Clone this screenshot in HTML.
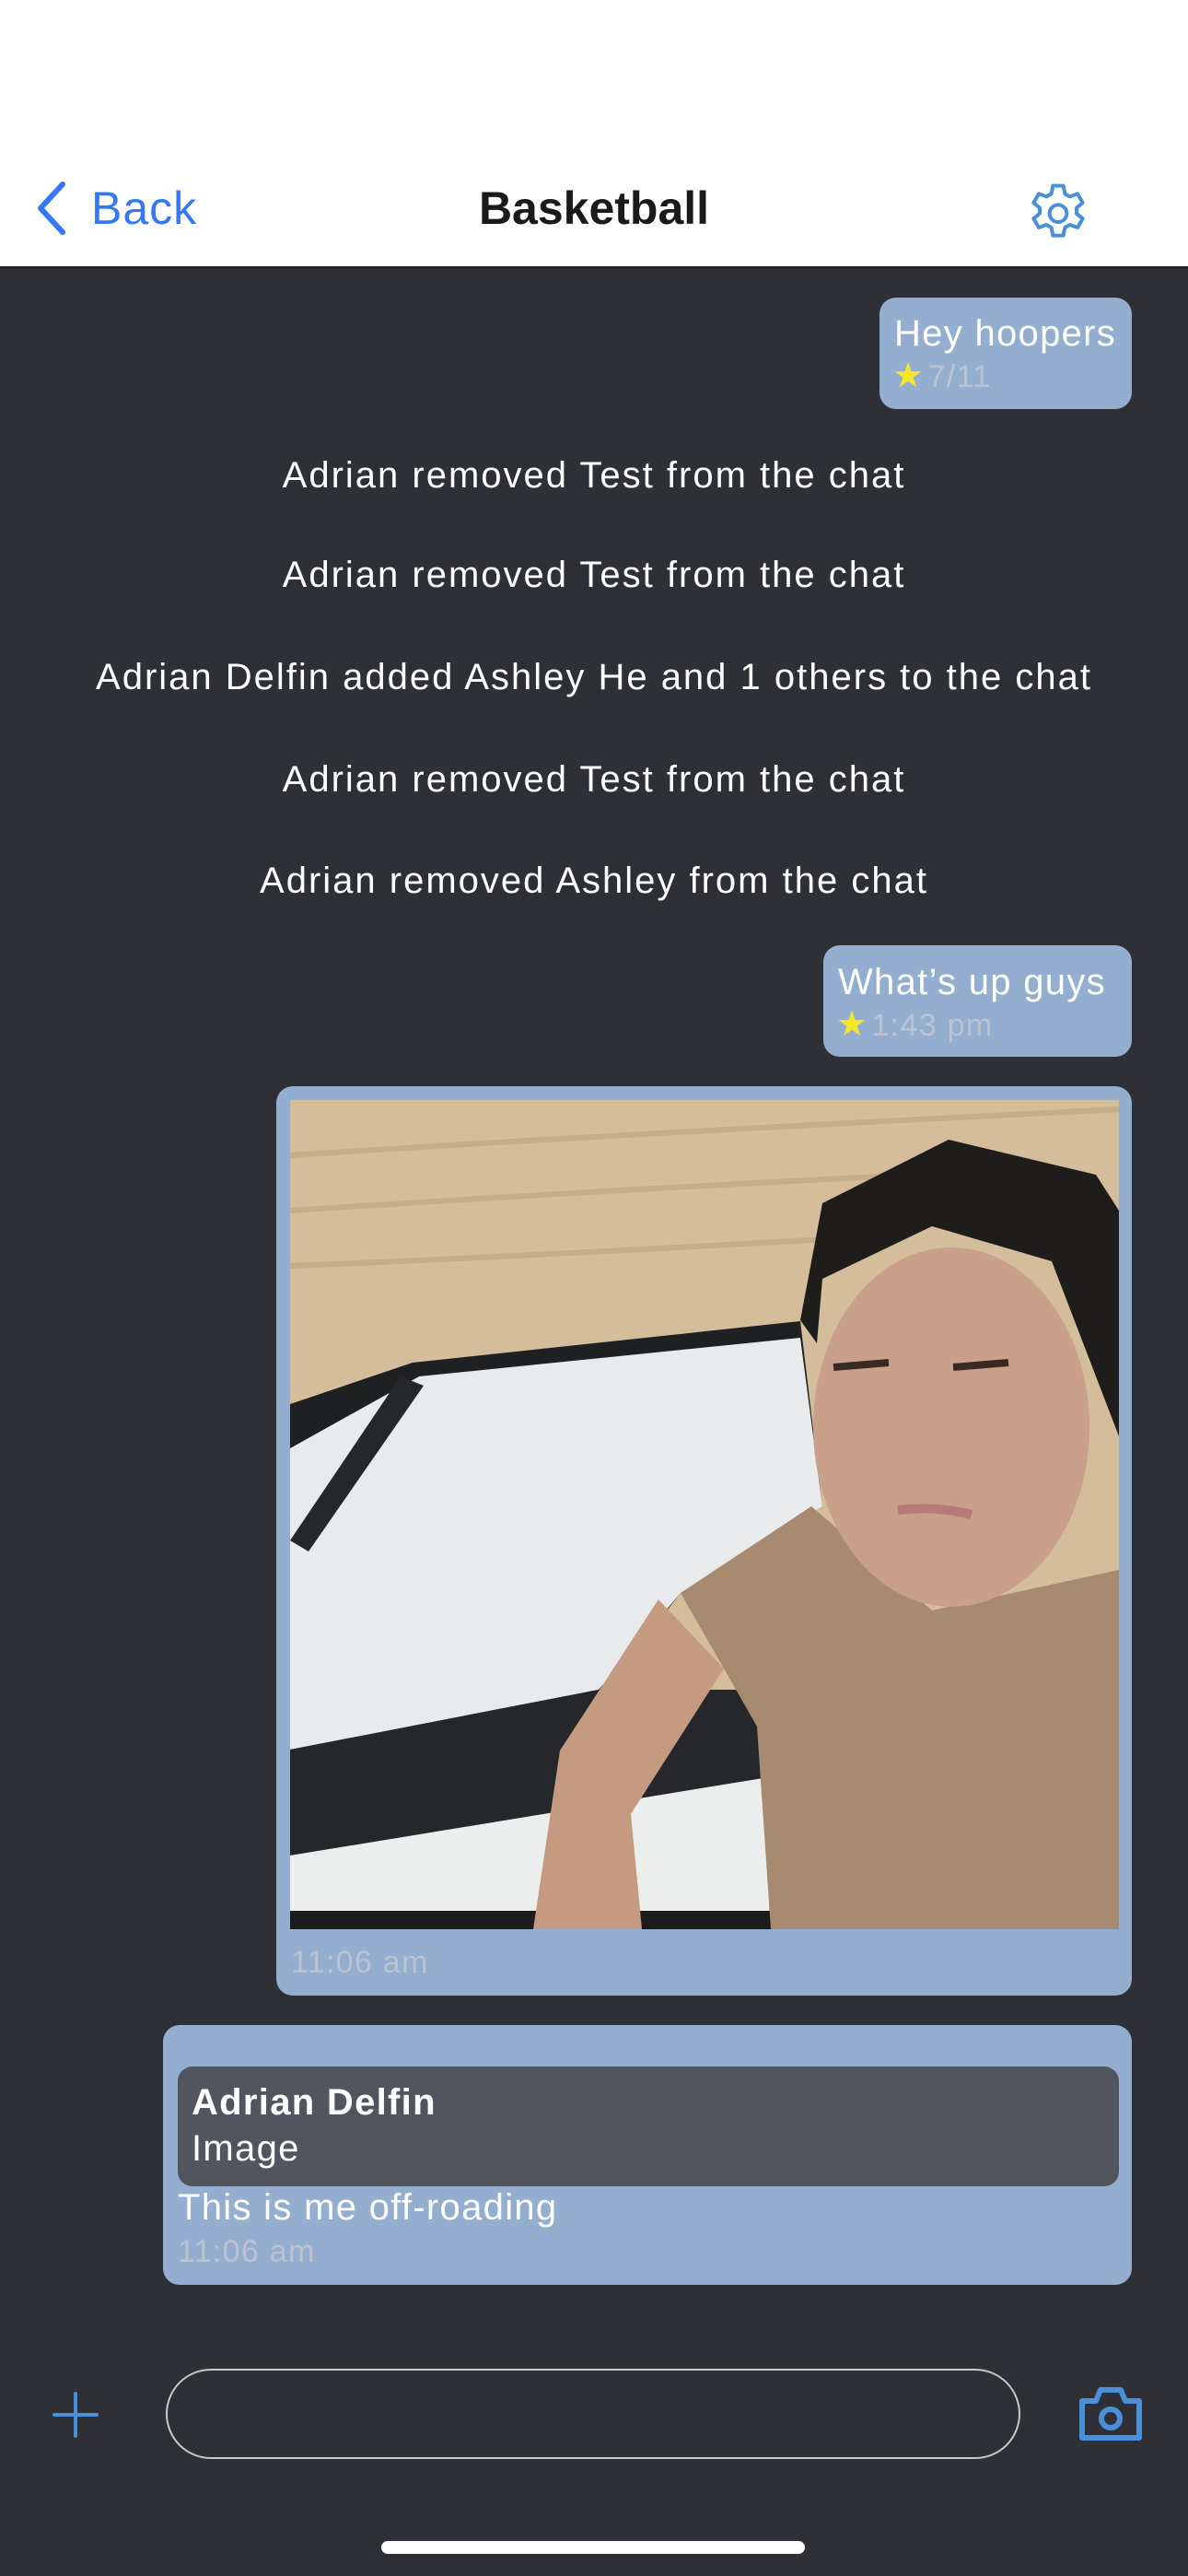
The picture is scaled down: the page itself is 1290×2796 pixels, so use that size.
<!DOCTYPE html>
<html><head><meta charset="utf-8"><style>
*{margin:0;padding:0;box-sizing:border-box}
body{width:1290px;height:2796px;background:#2f3035;font-family:"Liberation Sans",sans-serif;position:relative;overflow:hidden}
.a{position:absolute;white-space:nowrap}
.hdr{position:absolute;left:0;top:0;width:1290px;height:291px;background:#fff;border-bottom:2px solid #222}
.b{position:absolute;background:#94aed0;border-radius:18px}
.t{color:#fff;font-size:40px;line-height:46px;letter-spacing:1.3px}
.ts{color:#bcc3cf;font-size:34px;line-height:40px;letter-spacing:1.3px}
.sys{left:0;width:1290px;text-align:center;color:#fff;font-size:40px;line-height:46px;letter-spacing:2px}
.star{color:#f5e62a;font-size:38px}
</style></head><body>
<div class="hdr">
 <svg class="a" style="left:36px;top:196px" width="40" height="60" viewBox="0 0 40 60"><path d="M32 4 L8 30 L32 56" fill="none" stroke="#3478f6" stroke-width="6" stroke-linecap="round" stroke-linejoin="round"/></svg>
 <div class="a" style="left:99px;top:196px;font-size:50px;line-height:60px;color:#3478f6;letter-spacing:1px">Back</div>
 <div class="a" style="left:0;width:1290px;text-align:center;top:196px;font-size:50px;line-height:60px;font-weight:bold;color:#1a1a1a">Basketball</div>
 <svg class="a" style="left:1109px;top:190px" width="80" height="80" viewBox="0 0 24 24"><path fill="none" stroke="#4a90d9" stroke-width="1.2" stroke-linejoin="round" d="M10.3 2h3.4l.5 2.6 1.6.9 2.5-.9 1.7 2.9-2 1.7v1.8l2 1.7-1.7 2.9-2.5-.9-1.6.9-.5 2.6h-3.4l-.5-2.6-1.6-.9-2.5.9-1.7-2.9 2-1.7v-1.8l-2-1.7 1.7-2.9 2.5.9 1.6-.9z" transform="translate(0 1.5)"/><circle cx="12" cy="12.5" r="2.8" fill="none" stroke="#4a90d9" stroke-width="1.2"/></svg>
</div>

<div class="b" style="left:955px;top:323px;width:274px;height:121px"></div>
<div class="a t" style="left:971px;top:339px">Hey hoopers</div>
<div class="a" style="left:969px;top:386px;line-height:44px"><span class="star">★</span> <span class="ts">7/11</span></div>

<div class="a sys" style="top:493px">Adrian removed Test from the chat</div>
<div class="a sys" style="top:601px">Adrian removed Test from the chat</div>
<div class="a sys" style="top:712px">Adrian Delfin added Ashley He and 1 others to the chat</div>
<div class="a sys" style="top:823px">Adrian removed Test from the chat</div>
<div class="a sys" style="top:933px">Adrian removed Ashley from the chat</div>

<div class="b" style="left:894px;top:1026px;width:335px;height:121px"></div>
<div class="a t" style="left:910px;top:1043px">What’s up guys</div>
<div class="a" style="left:908px;top:1090px;line-height:44px"><span class="star">★</span> <span class="ts">1:43 pm</span></div>

<div class="b" style="left:300px;top:1179px;width:929px;height:987px"></div>
<svg class="a" style="left:315px;top:1194px" width="900" height="900" viewBox="0 0 900 900">
 <rect width="900" height="900" fill="#d3bd9b"/>
 <path d="M0 60 Q300 40 900 10 M0 120 Q300 100 700 80 M0 180 Q250 170 600 150" stroke="#c4ad88" stroke-width="6" fill="none"/>
 <path d="M0 330 L133 285 L554 240 L578 441 L424 535 L335 649 L0 718Z" fill="#1f2022"/>
 <path d="M0 378 L140 300 L554 258 L578 441 L424 535 L335 640 L0 705Z" fill="#e9eaec"/>
 <path d="M0 478 L120 300 L145 310 L20 490Z" fill="#262729"/>
 <path d="M0 705 L335 640 L520 640 L520 735 L0 820Z" fill="#25272a"/>
 <path d="M0 820 L520 735 L520 880 L0 880Z" fill="#eceded"/>
 <rect x="0" y="880" width="900" height="20" fill="#1c1c1d"/>
 <path d="M264 900 L293 706 L400 542 L471 617 L370 775 L382 900Z" fill="#c49a80"/>
 <path d="M424 535 L566 441 L697 554 L900 510 L900 900 L522 900 L507 680 L471 617Z" fill="#a78a6f"/>
 <ellipse cx="718" cy="355" rx="150" ry="195" fill="#c9a18a"/>
 <path d="M554 239 L578 112 L715 43 L875 81 L900 120 L900 365 L827 175 L697 137 L578 194 L572 264Z" fill="#1f1c1c"/>
 <path d="M590 290 L650 285 M720 290 L780 285" stroke="#3a2a25" stroke-width="8"/>
 <path d="M660 445 Q700 440 740 450" stroke="#b77a78" stroke-width="10" fill="none"/>
</svg>
<div class="a ts" style="left:316px;top:2110px">11:06 am</div>

<div class="b" style="left:177px;top:2198px;width:1052px;height:282px"></div>
<div class="a" style="left:193px;top:2243px;width:1022px;height:130px;background:#52555e;border-radius:16px"></div>
<div class="a t" style="left:208px;top:2259px;font-weight:bold">Adrian Delfin</div>
<div class="a t" style="left:208px;top:2309px">Image</div>
<div class="a t" style="left:193px;top:2373px">This is me off-roading</div>
<div class="a ts" style="left:193px;top:2424px">11:06 am</div>

<svg class="a" style="left:57px;top:2596px" width="50" height="50" viewBox="0 0 50 50"><path d="M25 2V48M2 25H48" stroke="#4a90d9" stroke-width="4" stroke-linecap="round"/></svg>
<div class="a" style="left:180px;top:2571px;width:928px;height:98px;border:2px solid #c8c8c8;border-radius:49px"></div>
<svg class="a" style="left:1170px;top:2588px" width="72" height="64" viewBox="0 0 72 64"><path d="M5 18 H20 L25 6 H47 L52 18 H67 V58 H5Z" fill="none" stroke="#4a90d9" stroke-width="6" stroke-linejoin="round"/><circle cx="36" cy="37" r="10" fill="none" stroke="#4a90d9" stroke-width="6"/></svg>

<div class="a" style="left:414px;top:2758px;width:460px;height:14px;background:#fff;border-radius:7px"></div>
</body></html>
